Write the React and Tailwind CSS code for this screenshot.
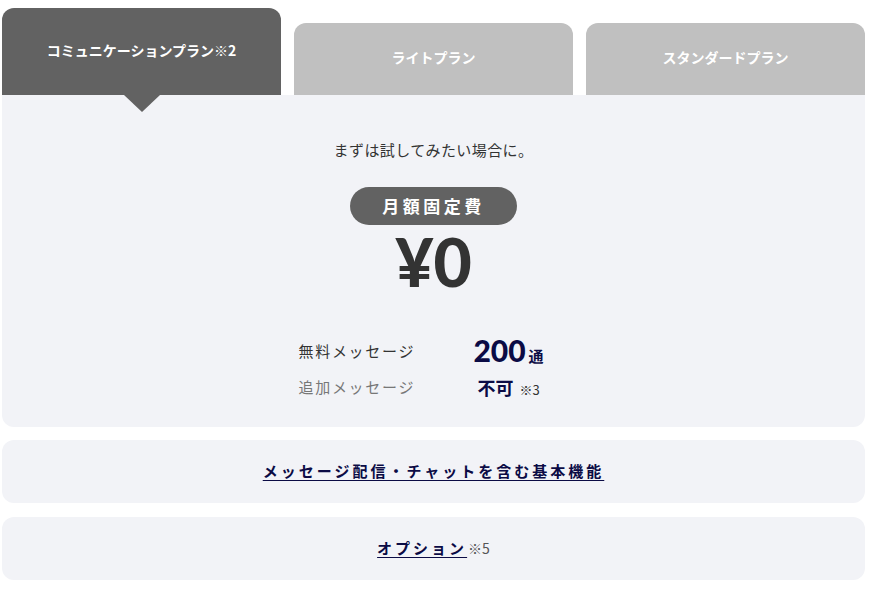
const jp = { fontFamily: '"Noto Sans CJK JP", "Noto Sans", sans-serif' };
const num = { fontFamily: 'Lato, "Noto Sans CJK JP", sans-serif' };

function Tab({ label, active }) {
  if (active) {
    return (
      <div className="relative flex h-[87px] w-[279px] items-center justify-center rounded-t-[12px] bg-[#626262] pb-[3px]">
        <span className="text-[14px] font-bold text-white">
          {label}
        </span>
        <div className="absolute left-1/2 top-full h-0 w-0 -translate-x-1/2 border-x-[18px] border-t-[17px] border-x-transparent border-t-[#626262]" />
      </div>
    );
  }
  return (
    <div className="flex h-[72px] w-[279px] items-center justify-center rounded-t-[12px] bg-[#c0c0c0] pb-[4px]">
      <span className="text-[14px] font-bold text-white">{label}</span>
    </div>
  );
}

export default function App() {
  return (
    <div className="min-h-[591px] w-[874px] bg-white" style={jp}>
      <div className="ml-[2px] w-[863px] pt-[8px]">
        <div className="flex items-end justify-between">
          <Tab label="コミュニケーションプラン※2" active />
          <Tab label="ライトプラン" />
          <Tab label="スタンダードプラン" />
        </div>

        <div className="flex h-[332px] flex-col items-center rounded-b-[12px] bg-[#f2f3f7] pt-[44px]">
          <p className="text-[15px] leading-[22px] tracking-[0.4px] text-[#333]">まずは試してみたい場合に。</p>
          <div className="mt-[26px] flex h-[38px] w-[167px] items-center justify-center rounded-full bg-[#626262]">
            <span className="text-[17px] font-bold tracking-[3.5px] text-white">月額固定費</span>
          </div>
          <div className="mt-[4px] text-[66px] font-black leading-none text-[#333]" style={num}>
            ¥0
          </div>

          <div className="mt-[43px] flex flex-col gap-[10px]">
            <div className="flex h-[26px] items-center">
              <span className="w-[150px] text-[15px] tracking-[1.7px] text-[#333]">無料メッセージ</span>
              <span className="flex w-[120px] items-baseline justify-center text-[#0b0b45]">
                <span className="text-[30px] font-black leading-none" style={num}>200</span>
                <span className="ml-[3px] text-[15px] font-bold">通</span>
              </span>
            </div>
            <div className="flex h-[26px] items-center">
              <span className="w-[150px] text-[15px] tracking-[1.7px] text-[#777]">追加メッセージ</span>
              <span className="flex w-[120px] items-baseline justify-center">
                <span className="text-[18px] font-bold text-[#0b0b45]">不可</span>
                <span className="ml-[6px] text-[13px] text-[#333]">※3</span>
              </span>
            </div>
          </div>
        </div>

        <div className="mt-[13px] flex h-[63px] items-center justify-center rounded-[12px] bg-[#f2f3f7]">
          <span className="text-[15px] font-bold tracking-[3px] text-[#0b0b45] underline underline-offset-[3px]">
            メッセージ配信・チャットを含む基本機能
          </span>
        </div>

        <div className="mt-[14px] flex h-[63px] items-center justify-center rounded-[12px] bg-[#f2f3f7]">
          <span className="text-[15px] font-bold tracking-[3px] text-[#0b0b45] underline underline-offset-[3px]">
            オプション
          </span>
          <span className="ml-[1px] text-[14px] text-[#555]">※5</span>
        </div>
      </div>
    </div>
  );
}
